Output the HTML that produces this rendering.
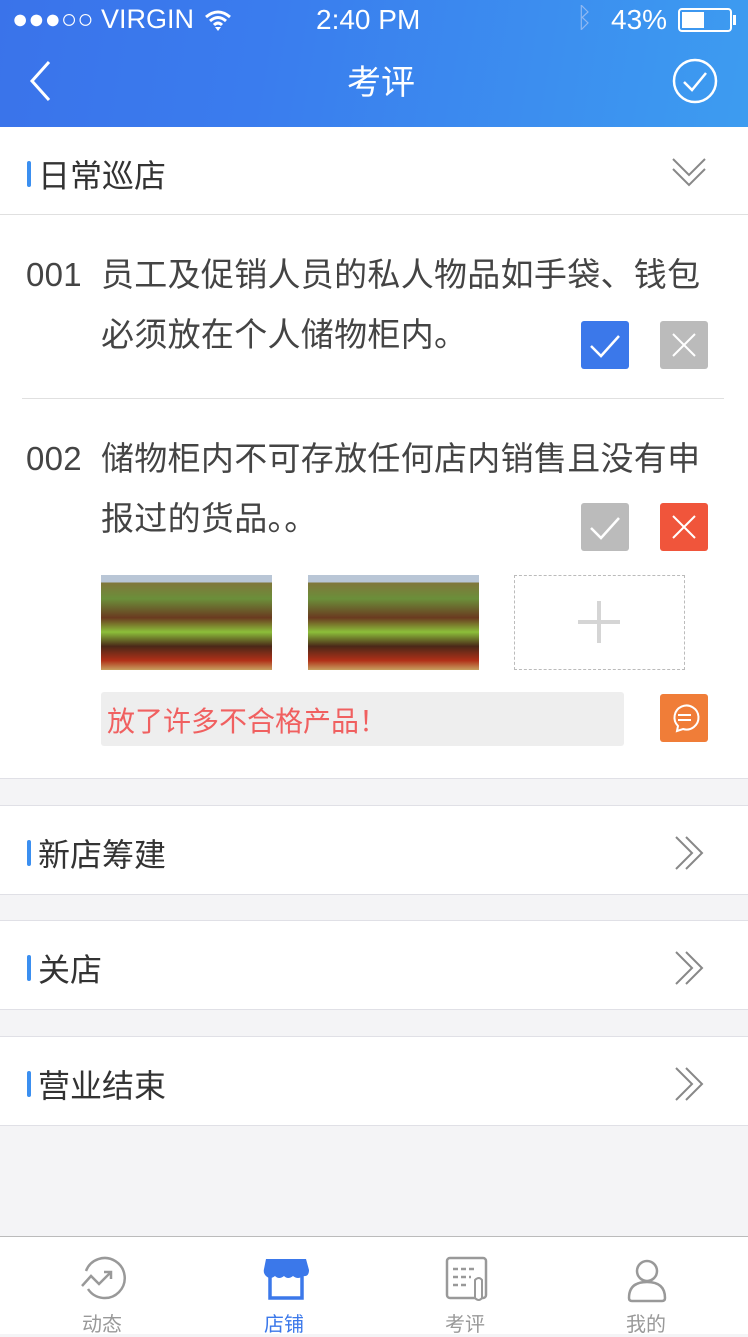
<!DOCTYPE html>
<html><head><meta charset="utf-8"><style>
*{margin:0;padding:0;box-sizing:border-box}
body{width:748px;height:1334px;position:relative;background:#f4f4f6;font-family:"Liberation Sans","Noto Sans CJK SC",sans-serif;overflow:hidden;color:#333}
.a{position:absolute}
.hdr{left:0;top:0;width:748px;height:127px;background:linear-gradient(100deg,#3a73ea 0%,#3a7cee 35%,#3d9cf0 100%)}
.w{color:#fff}
.sec{left:0;width:748px;background:#fff;border-top:1px solid #e0e0e6;border-bottom:1px solid #e0e0e6}
.bar{position:absolute;left:27px;width:4px;height:26px;background:#3b8ff0;border-radius:2px}
.st{position:absolute;left:38px;font-size:32px;color:#333;line-height:40px}
.txt{font-size:33px;color:#444;line-height:60px;letter-spacing:0.3px}
.btn{width:48px;height:48px;border-radius:3px}
.img{width:171px;height:95px;background:
linear-gradient(180deg,#b9c6d6 0%,#b9c6d6 8%,transparent 8%),
linear-gradient(180deg,#8a6a3a 0%,#6b8f3a 25%,#6a3a20 45%,#8cbf3a 60%,#4a2818 75%,#b03018 90%,#c8a060 100%);}
</style></head><body>
<div class="a hdr"></div>
<div class="a w" style="left:12px;top:4px;font-size:27px">●●●○○ VIRGIN</div>
<svg class="a" style="left:203px;top:8px" width="30" height="24" viewBox="0 0 30 24"><path d="M3 9Q15 -1 27 9M7 13Q15 6 23 13M11 17Q15 13 19 17" stroke="#fff" stroke-width="3" fill="none"/><path d="M12 19L15 23L18 19Z" fill="#fff"/></svg>
<div class="a w" style="left:316px;top:4px;font-size:28px">2:40 PM</div>
<div class="a" style="left:576px;top:2px;font-size:28px;color:#8fb8f2">ᛒ</div>
<div class="a w" style="left:611px;top:4px;font-size:28px">43%</div>
<div class="a" style="left:678px;top:8px;width:54px;height:24px;border:2px solid #fff;border-radius:4px"><div style="margin:2px;width:22px;height:16px;background:#fff"></div></div>
<div class="a" style="left:733px;top:15px;width:3px;height:10px;background:#fff"></div>
<svg class="a" style="left:28px;top:60px" width="26" height="42"><path d="M21 2L4 21L21 40" stroke="#fff" stroke-width="3" fill="none"/></svg>
<div class="a w" style="left:347px;top:55px;font-size:34px">考评</div>
<svg class="a" style="left:672px;top:58px" width="46" height="46"><circle cx="23" cy="23" r="21" stroke="#fff" stroke-width="2.5" fill="none"/><path d="M12 24L20 32L34 15" stroke="#fff" stroke-width="2.5" fill="none"/></svg>

<div class="a" style="left:0;top:127px;width:748px;height:652px;background:#fff;border-bottom:1px solid #e0e0e6"></div>
<div class="bar" style="top:161px"></div>
<div class="st" style="top:156px">日常巡店</div>
<svg class="a" style="left:670px;top:156px" width="40" height="34"><path d="M3 3L19 19L35 3M3 13L19 29L35 13" stroke="#888" stroke-width="2" fill="none"/></svg>
<div class="a" style="left:0;top:214px;width:748px;height:1px;background:#e0e0e0"></div>

<div class="a txt" style="left:26px;top:245px">001</div>
<div class="a txt" style="left:101px;top:245px;width:620px">员工及促销人员的私人物品如手袋、钱包<br>必须放在个人储物柜内。</div>
<div class="a btn" style="left:581px;top:321px;background:#3b78ea"></div>
<svg class="a" style="left:581px;top:321px" width="48" height="48"><path d="M10 25L20 35L38 15" stroke="#fff" stroke-width="2.5" fill="none"/></svg>
<div class="a btn" style="left:660px;top:321px;background:#bbb"></div>
<svg class="a" style="left:660px;top:321px" width="48" height="48"><path d="M13 13L35 35M35 13L13 35" stroke="#fff" stroke-width="2" fill="none"/></svg>
<div class="a" style="left:22px;top:398px;width:702px;height:1px;background:#e0e0e0"></div>

<div class="a txt" style="left:26px;top:429px">002</div>
<div class="a txt" style="left:101px;top:429px;width:620px">储物柜内不可存放任何店内销售且没有申<br>报过的货品。。</div>
<div class="a btn" style="left:581px;top:503px;background:#bbb"></div>
<svg class="a" style="left:581px;top:503px" width="48" height="48"><path d="M10 25L20 35L38 15" stroke="#fff" stroke-width="2.5" fill="none"/></svg>
<div class="a btn" style="left:660px;top:503px;background:#f0553b"></div>
<svg class="a" style="left:660px;top:503px" width="48" height="48"><path d="M13 13L35 35M35 13L13 35" stroke="#fff" stroke-width="2" fill="none"/></svg>

<div class="a img" style="left:101px;top:575px"></div>
<div class="a img" style="left:308px;top:575px"></div>
<div class="a" style="left:514px;top:575px;width:171px;height:95px;border:1px dashed #bbb"></div>
<div class="a" style="left:578px;top:620px;width:42px;height:4px;background:#d5d5d5"></div>
<div class="a" style="left:597px;top:601px;width:4px;height:42px;background:#d5d5d5"></div>

<div class="a" style="left:101px;top:692px;width:523px;height:54px;background:#eee;border-radius:3px"></div>
<div class="a" style="left:107px;top:704px;font-size:28px;color:#f06060;line-height:36px">放了许多不合格产品！</div>
<div class="a" style="left:660px;top:694px;width:48px;height:48px;background:#f07d38;border-radius:3px"></div>
<svg class="a" style="left:660px;top:694px" width="48" height="48"><path d="M17 37L18 32A12 12 0 1 1 23 35Z" stroke="#fff" stroke-width="2" fill="none"/><path d="M18 21H31M18 26H31" stroke="#fff" stroke-width="2"/></svg>

<div class="a sec" style="top:805px;height:90px"><div class="bar" style="top:34px"></div><div class="st" style="top:29px">新店筹建</div><svg class="a" style="left:672px;top:29px" width="36" height="36"><path d="M4 2L20 18L4 34M14 2L30 18L14 34" stroke="#888" stroke-width="2" fill="none"/></svg></div>
<div class="a sec" style="top:920px;height:90px"><div class="bar" style="top:34px"></div><div class="st" style="top:29px">关店</div><svg class="a" style="left:672px;top:29px" width="36" height="36"><path d="M4 2L20 18L4 34M14 2L30 18L14 34" stroke="#888" stroke-width="2" fill="none"/></svg></div>
<div class="a sec" style="top:1036px;height:90px"><div class="bar" style="top:34px"></div><div class="st" style="top:29px">营业结束</div><svg class="a" style="left:672px;top:29px" width="36" height="36"><path d="M4 2L20 18L4 34M14 2L30 18L14 34" stroke="#888" stroke-width="2" fill="none"/></svg></div>

<div class="a" style="left:0;top:1236px;width:748px;height:98px;background:#fff;border-top:1px solid #bbb"></div>
<svg class="a" style="left:78px;top:1256px" width="50" height="46"><path d="M8 15A20 20 0 1 1 10 33" stroke="#999" stroke-width="2.5" fill="none" transform="rotate(0)"/><path d="M4 30L13 20L21 28L33 16M26 16H33V23" stroke="#999" stroke-width="2.5" fill="none"/></svg>
<svg class="a" style="left:262px;top:1258px" width="48" height="42"><path d="M4 1H44L47 12Q47 19 41 18Q36 22 31 18Q26 22 22 18Q17 22 13 18Q8 22 4 18Q1 15 2 11Z" fill="#3b78ea"/><path d="M8 18V40H40V18" stroke="#3b78ea" stroke-width="3.5" fill="none"/></svg>
<svg class="a" style="left:444px;top:1256px" width="46" height="48"><rect x="3" y="2" width="39" height="40" rx="3" stroke="#999" stroke-width="2.5" fill="none"/><path d="M9 13H33M9 21H27M9 29H22" stroke="#999" stroke-width="2.5" stroke-dasharray="5 3"/><path d="M31 24V42Q35 46 38 42V24Q35 20 31 24Z" stroke="#999" stroke-width="2" fill="#fff"/></svg>
<svg class="a" style="left:624px;top:1257px" width="46" height="46"><circle cx="23" cy="14" r="10" stroke="#999" stroke-width="2.5" fill="none"/><path d="M5 41Q5 25 23 25Q41 25 41 41Q41 44 38 44H8Q5 44 5 41Z" stroke="#999" stroke-width="2.5" fill="none"/></svg>
<div class="a" style="left:82px;top:1308px;font-size:20px;color:#999">动态</div>
<div class="a" style="left:264px;top:1308px;font-size:20px;color:#3b78ea">店铺</div>
<div class="a" style="left:445px;top:1308px;font-size:20px;color:#999">考评</div>
<div class="a" style="left:626px;top:1308px;font-size:20px;color:#999">我的</div>
</body></html>
